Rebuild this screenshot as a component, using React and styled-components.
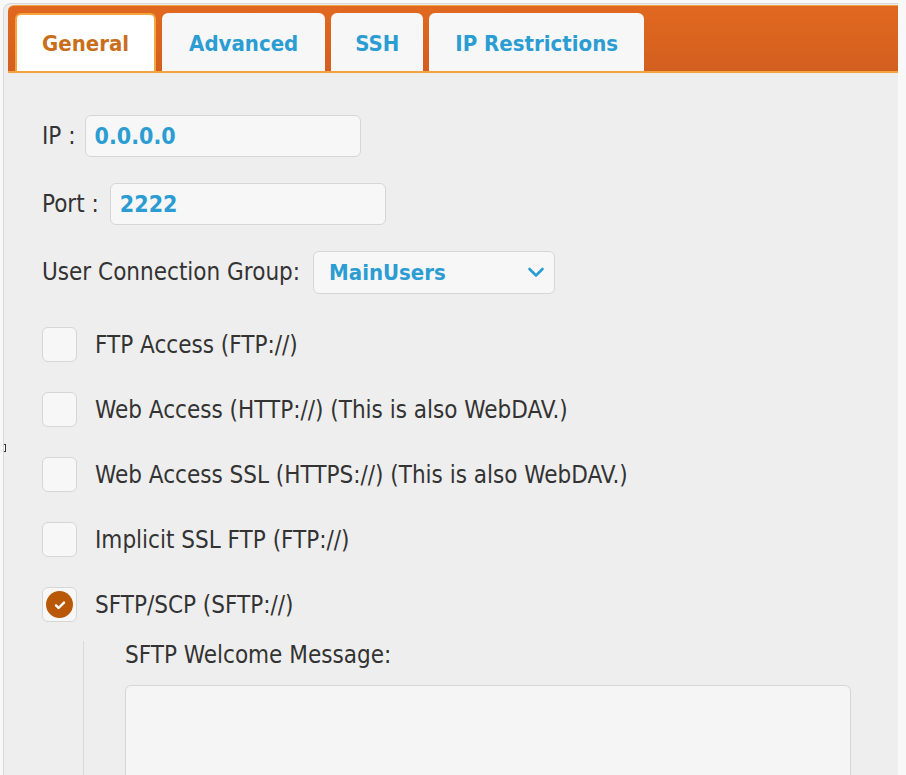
import React from 'react';
import styled, { createGlobalStyle } from 'styled-components';

const GlobalStyle = createGlobalStyle`
  html, body {
    margin: 0;
    background: #f8f8f8;
  }
  body {
    font-family: "DejaVu Sans Condensed", "DejaVu Sans", sans-serif;
    color: #333;
    overflow: hidden;
  }
`;

const Panel = styled.div`
  position: relative;
  margin: 3px 8px 0 3px;
  height: 772px;
  box-sizing: border-box;
  padding: 1px 0 0 4px;
  background: #eeeeee;
  border: 1px solid #d9d9d9;
  border-right: none;
  border-bottom: none;
  border-top-left-radius: 8px;
  overflow: hidden;
`;

const TabBar = styled.ul`
  display: flex;
  align-items: flex-end;
  gap: 6px;
  height: 68px;
  box-sizing: border-box;
  margin: 0;
  padding: 7px 0 0 7px;
  list-style: none;
  background: linear-gradient(#e1681f, #d35f1f);
  border-top: 1px solid #f0a24a;
  border-bottom: 2px solid #f3a33f;
  border-top-left-radius: 6px;
`;

const Tab = styled.li`
  display: flex;
  align-items: center;
  height: 58px;
  box-sizing: border-box;
  padding: 0 ${(p) => p.$pad}px;
  font-size: 22px;
  font-weight: bold;
  border-radius: 6px 6px 0 0;
  background: ${(p) => (p.$active ? '#ffffff' : '#f7f7f7')};
  color: ${(p) => (p.$active ? '#c96f1c' : '#2b9dd2')};
  border: 2px solid ${(p) => (p.$active ? '#f4a53d' : 'transparent')};
  border-bottom: none;
  cursor: pointer;
`;

const Form = styled.div`
  display: flex;
  flex-direction: column;
  padding: 42px 0 0 34px;
`;

const FieldRow = styled.label`
  display: flex;
  align-items: center;
  gap: ${(p) => p.$gap || 9}px;
  height: 42px;
  margin-bottom: 26px;
  font-size: 24px;
`;

const TextInput = styled.input`
  width: 276px;
  height: 42px;
  box-sizing: border-box;
  padding: 0 9px;
  font-family: inherit;
  font-size: 23px;
  font-weight: bold;
  color: #2b9dd2;
  background: #f7f7f7;
  border: 1px solid #d6d6d6;
  border-radius: 6px;
  outline: none;
`;

const Select = styled.div`
  display: flex;
  align-items: center;
  justify-content: space-between;
  width: 242px;
  height: 43px;
  box-sizing: border-box;
  padding: 0 8px 0 15px;
  font-size: 22px;
  font-weight: bold;
  color: #2b9dd2;
  background: #f7f7f7;
  border: 1px solid #d6d6d6;
  border-radius: 6px;
`;

const Options = styled.div`
  display: flex;
  flex-direction: column;
  gap: 30px;
  margin-top: 8px;
`;

const CheckRow = styled.label`
  display: flex;
  align-items: center;
  gap: 18px;
  height: 35px;
  font-size: 24px;
`;

const Box = styled.span`
  display: flex;
  align-items: center;
  justify-content: center;
  flex: none;
  width: 35px;
  height: 35px;
  box-sizing: border-box;
  background: #f7f7f7;
  border: 1px solid #d6d6d6;
  border-radius: 6px;
`;

const Tick = styled.span`
  display: flex;
  align-items: center;
  justify-content: center;
  width: 27px;
  height: 27px;
  border-radius: 50%;
  background: #b95908;
`;

const SubSection = styled.div`
  margin: 19px 0 0 41px;
  padding: 0 0 0 41px;
  border-left: 1px solid #d9d9d9;
`;

const SubLabel = styled.div`
  font-size: 24px;
  line-height: 28px;
  margin-bottom: 16px;
`;

const TextArea = styled.textarea`
  display: block;
  width: 726px;
  height: 140px;
  box-sizing: border-box;
  padding: 8px;
  font-family: inherit;
  font-size: 18px;
  background: #f5f5f5;
  border: 1px solid #d6d6d6;
  border-radius: 6px;
  resize: none;
  outline: none;
`;

const Marker = styled.span`
  position: absolute;
  left: -6px;
  top: 440px;
  width: 6px;
  height: 6px;
  border: 1px solid #333;
  background: #fff;
`;

const tabs = [
  { name: 'General', pad: 25 },
  { name: 'Advanced', pad: 25 },
  { name: 'SSH', pad: 22 },
  { name: 'IP Restrictions', pad: 24 },
];

const options = [
  { label: 'FTP Access (FTP://)', checked: false },
  { label: 'Web Access (HTTP://) (This is also WebDAV.)', checked: false },
  { label: 'Web Access SSL (HTTPS://) (This is also WebDAV.)', checked: false },
  { label: 'Implicit SSL FTP (FTP://)', checked: false },
  { label: 'SFTP/SCP (SFTP://)', checked: true },
];

function Chevron() {
  return (
    <svg width="20" height="20" viewBox="0 0 20 20" fill="none">
      <path d="M3.5 7l6.5 6.5L16.5 7" stroke="#2b9dd2" strokeWidth="2.6" strokeLinecap="round" strokeLinejoin="round" />
    </svg>
  );
}

function Check() {
  return (
    <svg width="14" height="14" viewBox="0 0 14 14" fill="none">
      <path d="M3 7.4l2.6 2.6L11 4.6" stroke="#fff" strokeWidth="2.4" strokeLinecap="round" strokeLinejoin="round" />
    </svg>
  );
}

export default function App() {
  return (
    <>
      <GlobalStyle />
      <Panel>
        <Marker />
        <TabBar>
          {tabs.map((t, i) => (
            <Tab key={t.name} $active={i === 0} $pad={t.pad}>
              {t.name}
            </Tab>
          ))}
        </TabBar>

        <Form>
          <FieldRow>
            IP :
            <TextInput defaultValue="0.0.0.0" />
          </FieldRow>
          <FieldRow $gap={11}>
            Port :
            <TextInput defaultValue="2222" />
          </FieldRow>
          <FieldRow $gap={13}>
            User Connection Group:
            <Select>
              MainUsers
              <Chevron />
            </Select>
          </FieldRow>

          <Options>
            {options.map((o) => (
              <CheckRow key={o.label}>
                <Box>
                  {o.checked && (
                    <Tick>
                      <Check />
                    </Tick>
                  )}
                </Box>
                {o.label}
              </CheckRow>
            ))}
          </Options>

          <SubSection>
            <SubLabel>SFTP Welcome Message:</SubLabel>
            <TextArea />
          </SubSection>
        </Form>
      </Panel>
    </>
  );
}
